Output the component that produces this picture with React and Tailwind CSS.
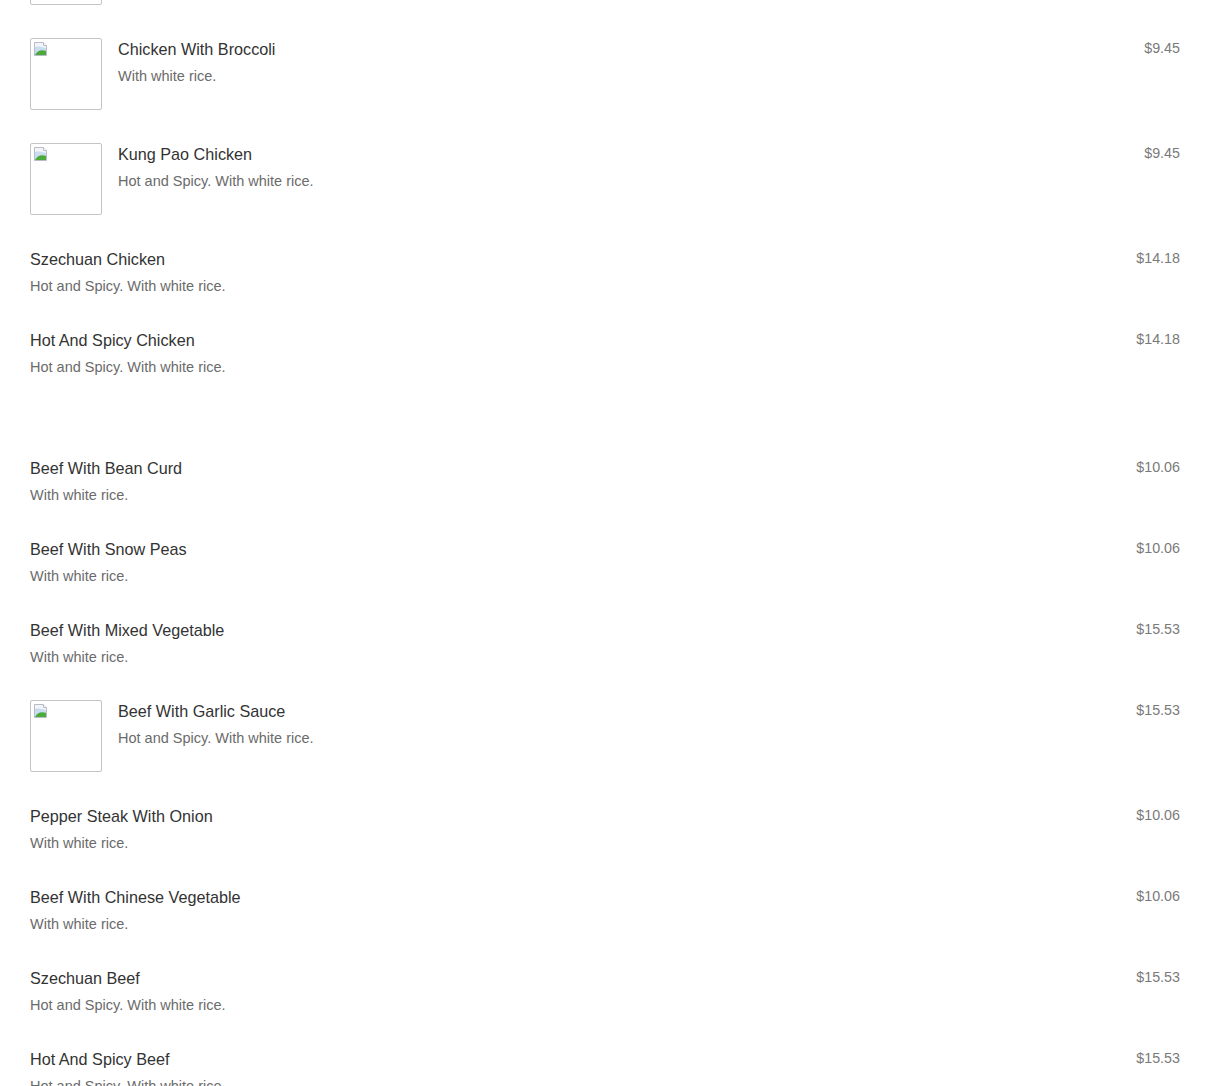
import React from 'react';

const items = [
  { name: 'Chicken With Garlic Sauce', desc: 'Hot and Spicy. With white rice.', price: '$9.45', img: true },
  { name: 'Chicken With Broccoli', desc: 'With white rice.', price: '$9.45', img: true },
  { name: 'Kung Pao Chicken', desc: 'Hot and Spicy. With white rice.', price: '$9.45', img: true },
  { name: 'Szechuan Chicken', desc: 'Hot and Spicy. With white rice.', price: '$14.18' },
  { name: 'Hot And Spicy Chicken', desc: 'Hot and Spicy. With white rice.', price: '$14.18' },
  { spacer: true },
  { name: 'Beef With Bean Curd', desc: 'With white rice.', price: '$10.06' },
  { name: 'Beef With Snow Peas', desc: 'With white rice.', price: '$10.06' },
  { name: 'Beef With Mixed Vegetable', desc: 'With white rice.', price: '$15.53' },
  { name: 'Beef With Garlic Sauce', desc: 'Hot and Spicy. With white rice.', price: '$15.53', img: true },
  { name: 'Pepper Steak With Onion', desc: 'With white rice.', price: '$10.06' },
  { name: 'Beef With Chinese Vegetable', desc: 'With white rice.', price: '$10.06' },
  { name: 'Szechuan Beef', desc: 'Hot and Spicy. With white rice.', price: '$15.53' },
  { name: 'Hot And Spicy Beef', desc: 'Hot and Spicy. With white rice.', price: '$15.53' },
];

// broken image placeholder, like the browser draws it
const BrokenImage = () => (
  <div className="w-[72px] h-[72px] shrink-0 border border-[#c4c4c4] rounded-[2px] bg-white p-[2px]">
    <svg width="16" height="16" viewBox="0 0 16 16">
      <path d="M1.5 1.5h9l3 3v10h-12z" fill="#f2f4f8" stroke="#b8bcc6" />
      <path d="M2 6c3-1 6 0 11 1v7H2z" fill="#c9dcf0" />
      <path d="M2 14c2-4 6-6 11-4v4z" fill="#4caa3c" />
      <path d="M10.5 1.5v3h3" fill="#fff" stroke="#b8bcc6" />
    </svg>
  </div>
);

const Row = ({ item }) => (
  <div className="flex items-start pb-[33px]">
    {item.img && <BrokenImage />}
    <div className={`flex-1 ${item.img ? 'pl-4' : ''}`}>
      <div className="text-[16.2px] leading-[22px] text-[#333333]">{item.name}</div>
      <div className="mt-[7px] text-[14.5px] leading-[19px] text-[#6b6b6b]">{item.desc}</div>
    </div>
    <div className="text-[14.3px] leading-5 text-[#7a7a7a]">{item.price}</div>
  </div>
);

export default function App() {
  return (
    <div className="h-[1086px] overflow-hidden bg-white" style={{ fontFamily: '"Liberation Sans", Arial, sans-serif' }}>
      <div className="px-[30px] -mt-[67px]">
        {items.map((item, i) =>
          item.spacer ? <div key={i} className="h-[47px]" /> : <Row key={i} item={item} />
        )}
      </div>
    </div>
  );
}
